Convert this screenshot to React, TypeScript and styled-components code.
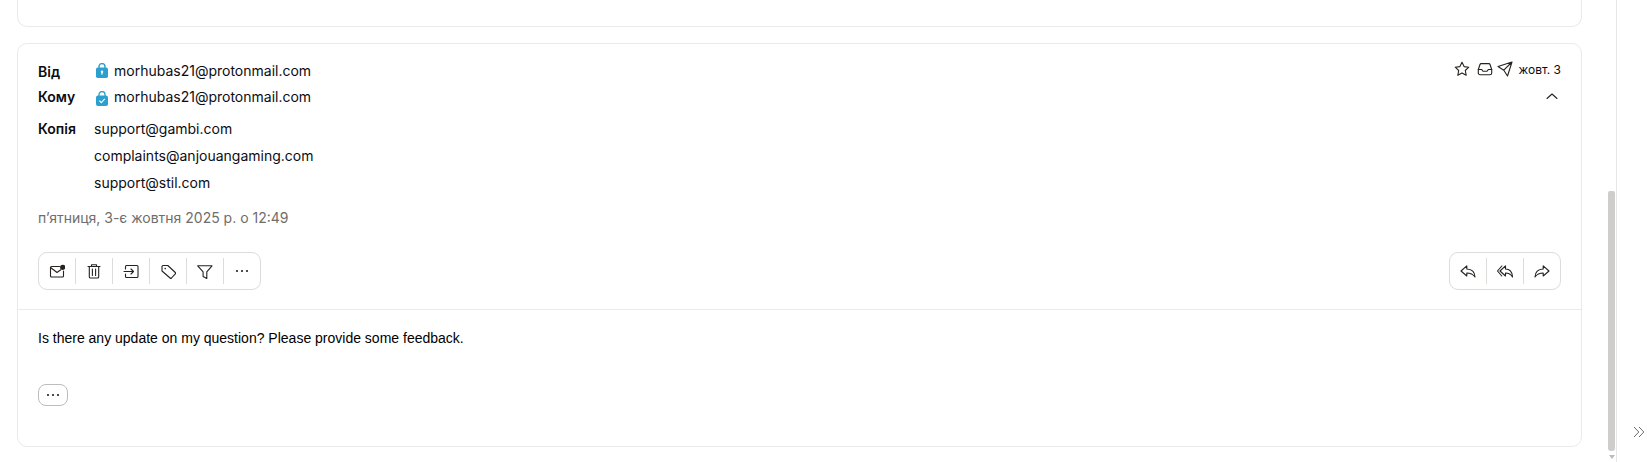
import { ReactNode } from "react";
import styled, { createGlobalStyle } from "styled-components";

const GlobalStyle = createGlobalStyle`
  html, body {
    margin: 0;
    height: 100%;
    background: #fff;
    overflow: hidden;
  }
  #root {
    height: 100%;
  }
`;

const Icon = ({ children }: { children: ReactNode }) => (
  <svg width="16" height="16" viewBox="0 0 16 16" fill="none" stroke="#26221f" strokeWidth="1.1" strokeLinecap="round" strokeLinejoin="round">
    {children}
  </svg>
);

const LockIcon = () => (
  <svg width="12" height="15" viewBox="0 0 12 15">
    <path d="M3 5.500V3.600a3 3 0 0 1 6 0v1.900" fill="none" stroke="#2a9fd0" strokeWidth="1.4" />
    <rect x="0" y="4.500" width="12" height="10.500" rx="1.800" fill="#2a9fd0" />
    <circle cx="6" cy="8.700" r="1.200" fill="#fff" />
    <rect x="5.400" y="8.700" width="1.200" height="2.900" fill="#fff" />
  </svg>
);

const CheckLockIcon = () => (
  <CheckLockBox width="12" height="15" viewBox="0 0 12 15">
    <path d="M3 5.500V3.600a3 3 0 0 1 6 0v1.900" fill="none" stroke="#2a9fd0" strokeWidth="1.300" />
    <rect x="0" y="4.500" width="12" height="10.500" rx="2" fill="#2a9fd0" />
    <path d="M3.300 9.600l2 2 3.500-3.700" fill="none" stroke="#fff" strokeWidth="1.200" />
  </CheckLockBox>
);

const Dots = () => (
  <Icon>
    <circle cx="3" cy="8" r="1.100" fill="#26221f" stroke="none" />
    <circle cx="8" cy="8" r="1.100" fill="#26221f" stroke="none" />
    <circle cx="13" cy="8" r="1.100" fill="#26221f" stroke="none" />
  </Icon>
);

const leftActions = [
  <Icon key="unread">
    <path d="M14.500 8v5a1 1 0 0 1-1 1h-11a1 1 0 0 1-1-1V4.500a1 1 0 0 1 1-1h8" />
    <path d="M1.500 4.500L8 9.500l3.800-2.700" />
    <circle cx="13.700" cy="4.300" r="2.600" fill="#26221f" stroke="none" />
  </Icon>,
  <Icon key="trash">
    <path d="M2 3.500h12M5.500 3.300V1.800h5v1.500M3.300 3.500v10.200a1.300 1.300 0 0 0 1.300 1.300h6.800a1.300 1.300 0 0 0 1.300-1.300V3.500M6.400 6v6.500M9.600 6v6.500" />
  </Icon>,
  <Icon key="move">
    <path d="M2.500 6V3.500a1 1 0 0 1 1-1H14a1 1 0 0 1 1 1v10a1 1 0 0 1-1 1H3.500a1 1 0 0 1-1-1V11" />
    <path d="M1 8.500h9.500M8 6l2.500 2.500L8 11" />
  </Icon>,
  <Icon key="tag">
    <path d="M2 3.500a1 1 0 0 1 1-1h4.800l7.500 7a1 1 0 0 1 0 1.400l-3.800 4.100a1 1 0 0 1-1.400 0L2 8z" />
    <circle cx="5.200" cy="5.600" r="0.800" fill="#26221f" stroke="none" />
  </Icon>,
  <Icon key="filter">
    <path d="M0.700 2.800h14.300L9.800 8.800v6.700l-3.700-2V8.800z" />
  </Icon>,
  <Dots key="more" />,
];

const rightActions = [
  <Icon key="reply">
    <path d="M6.800 2.800L1 8l5.800 5V10c3.200 0 5.700.5 8.200 4-.2-4.800-3.500-7.800-8.200-8z" />
  </Icon>,
  <Icon key="replyall">
    <path d="M4.800 3L.5 8l4.300 5" />
    <path d="M8.500 2.800L3 8l5.500 5V10c3 0 5 .5 7 4-.2-4.800-2.500-7.800-7-8z" />
  </Icon>,
  <Icon key="forward">
    <path d="M9.200 2.800L15 8l-5.800 5V10C6 10 3.500 10.500 1 14c.2-4.800 3.500-7.800 8.200-8z" />
  </Icon>,
];

const App = () => (
  <>
    <GlobalStyle />
    <Page>
      <Main>
        <TopCard />
        <MessageCard>
          <Header>
            <Meta>
              <Row $height={27}>
                <Label $drop>Від</Label>
                <IconValue>
                  <LockIcon />
                  <span>morhubas21@protonmail.com</span>
                </IconValue>
              </Row>
              <Row $height={25}>
                <Label>Кому</Label>
                <IconValue>
                  <CheckLockIcon />
                  <span>morhubas21@protonmail.com</span>
                </IconValue>
              </Row>
              <CopyRow>
                <Label>Копія</Label>
                <CopyList>
                  <span>support@gambi.com</span>
                  <span>complaints@anjouangaming.com</span>
                  <span>support@stil.com</span>
                </CopyList>
              </CopyRow>
              <DateLine>п’ятниця, 3-є жовтня 2025 р. о 12:49</DateLine>
            </Meta>
            <Side>
              <SideTop>
                <Icon>
                  <path d="M8 1.200l2.100 4.400 4.700.6-3.500 3.300.9 4.800L8 12l-4.200 2.300.9-4.800-3.500-3.300 4.700-.6z" />
                </Icon>
                <Icon>
                  <path d="M1.300 8.500l1.700-5a1.300 1.300 0 0 1 1.200-.9h7.600a1.300 1.300 0 0 1 1.200.9l1.700 5v3.400a1.800 1.800 0 0 1-1.800 1.800H3.100a1.800 1.800 0 0 1-1.800-1.800z" />
                  <path d="M1.300 8.500h3.400l1.300 1.800h4l1.300-1.800h3.400" />
                </Icon>
                <Icon>
                  <path d="M15 1L1 5.500l5.800 3.700L10.500 15zM6.800 9.200L15 1" />
                </Icon>
                <DateShort>жовт. 3</DateShort>
              </SideTop>
              <Chevron>
                <Icon>
                  <path d="M3 10.500L8 6l5 4.500" />
                </Icon>
              </Chevron>
            </Side>
          </Header>
          <Toolbar>
            <ActionGroup>
              {leftActions.map((icon) => (
                <ActionButton key={icon.key}>{icon}</ActionButton>
              ))}
            </ActionGroup>
            <ActionGroup>
              {rightActions.map((icon) => (
                <ActionButton key={icon.key}>{icon}</ActionButton>
              ))}
            </ActionGroup>
          </Toolbar>
          <Body>
            <BodyText>Is there any update on my question? Please provide some feedback.</BodyText>
            <QuoteToggle>
              <Dots />
            </QuoteToggle>
          </Body>
        </MessageCard>
      </Main>
      <Scrollbar>
        <ScrollThumb />
        <ScrollArrow />
      </Scrollbar>
      <Rail>
        <svg width="12" height="12" viewBox="0 0 12 12" fill="none" stroke="#6f6a66" strokeWidth="1">
          <path d="M1 1l4.800 5L1 11M6 1l4.800 5L6 11" />
        </svg>
      </Rail>
    </Page>
  </>
);

export default App;

const Page = styled.div`
  display: flex;
  width: 1647px;
  height: 462px;
  overflow: hidden;
  font-family: Inter, "Noto Sans", sans-serif;
  color: #0c0c14;
`;

const Main = styled.div`
  width: 1582px;
  flex-shrink: 0;
  padding-left: 17px;
  box-sizing: border-box;
  display: flex;
  flex-direction: column;
  gap: 16px;
`;

const TopCard = styled.div`
  height: 27px;
  flex-shrink: 0;
  box-sizing: border-box;
  border: 1px solid #eaeaea;
  border-top: none;
  border-radius: 0 0 10px 10px;
`;

const MessageCard = styled.div`
  height: 404px;
  flex-shrink: 0;
  box-sizing: border-box;
  border: 1px solid #eaeaea;
  border-radius: 10px;
`;

const Header = styled.div`
  display: flex;
  justify-content: space-between;
  padding: 13px 20px 0 20px;
`;

const Meta = styled.div`
  display: flex;
  flex-direction: column;
`;

const Row = styled.div<{ $height: number }>`
  display: flex;
  align-items: center;
  height: ${(p) => p.$height}px;
  font-size: 14px;
`;

const Label = styled.span<{ $drop?: boolean }>`
  width: 56px;
  margin-top: ${(p) => (p.$drop ? "2px" : "0")};
  font-size: 14px;
  font-weight: 600;
  flex-shrink: 0;
`;

const IconValue = styled.div`
  display: flex;
  align-items: center;
  gap: 6px;
  padding-left: 2px;
`;

const CheckLockBox = styled.svg`
  margin-top: 3px;
`;

const CopyRow = styled.div`
  display: flex;
  font-size: 14px;
  line-height: 27px;
  margin-top: 6px;
`;

const CopyList = styled.div`
  display: flex;
  flex-direction: column;
`;

const DateLine = styled.div`
  margin-top: 8px;
  font-size: 14px;
  line-height: 27px;
  color: #706d6b;
`;

const Side = styled.div`
  display: flex;
  flex-direction: column;
  align-items: flex-end;
`;

const SideTop = styled.div`
  display: flex;
  align-items: center;
  gap: 4px;
  height: 24px;

  & > svg:first-child {
    margin-right: 3px;
  }

  & > span {
    margin-left: 1px;
  }
`;

const DateShort = styled.span`
  font-size: 12px;
`;

const Chevron = styled.div`
  display: flex;
  align-items: center;
  height: 26px;
  margin: 2px 1px 0 0;
`;

const Toolbar = styled.div`
  display: flex;
  justify-content: space-between;
  margin-top: 21px;
  padding: 0 20px;
  height: 57px;
`;

const ActionGroup = styled.div`
  display: flex;
  align-items: center;
  height: 38px;
  box-sizing: border-box;
  border: 1px solid #dedbd9;
  border-radius: 9px;
`;

const ActionButton = styled.div`
  width: 37px;
  height: 26px;
  box-sizing: border-box;
  display: flex;
  align-items: center;
  justify-content: center;
  border-left: 1px solid #dedbd9;

  &:first-child {
    width: 36px;
    border-left: none;
  }
`;

const Body = styled.div`
  border-top: 1px solid #eaeaea;
  padding: 19px 20px 0;
`;

const BodyText = styled.div`
  font-family: "Liberation Sans", Arial, sans-serif;
  font-size: 14px;
  line-height: 18px;
  color: #000;
`;

const QuoteToggle = styled.div`
  margin-top: 37px;
  width: 30px;
  height: 22px;
  box-sizing: border-box;
  border: 1px solid #bdbdbd;
  border-radius: 8px;
  display: flex;
  align-items: center;
  justify-content: center;
`;

const Scrollbar = styled.div`
  width: 35px;
  height: 462px;
  flex-shrink: 0;
  display: flex;
  flex-direction: column;
  align-items: flex-start;
  padding: 191px 0 0 26px;
  box-sizing: border-box;
  border-right: 1px solid #e8e6e4;
`;

const ScrollThumb = styled.div`
  width: 7px;
  height: 260px;
  flex-shrink: 0;
  background: #cfcdcb;
  border-radius: 2px 2px 3px 3px;
`;

const ScrollArrow = styled.div`
  margin: 4px 0 0 0.5px;
  width: 0;
  height: 0;
  border-left: 3px solid transparent;
  border-right: 3px solid transparent;
  border-top: 4px solid #bdbbb9;
`;

const Rail = styled.div`
  flex: 1;
  display: flex;
  justify-content: flex-end;
  align-items: flex-end;
  padding: 0 2px 24px 0;
`;
